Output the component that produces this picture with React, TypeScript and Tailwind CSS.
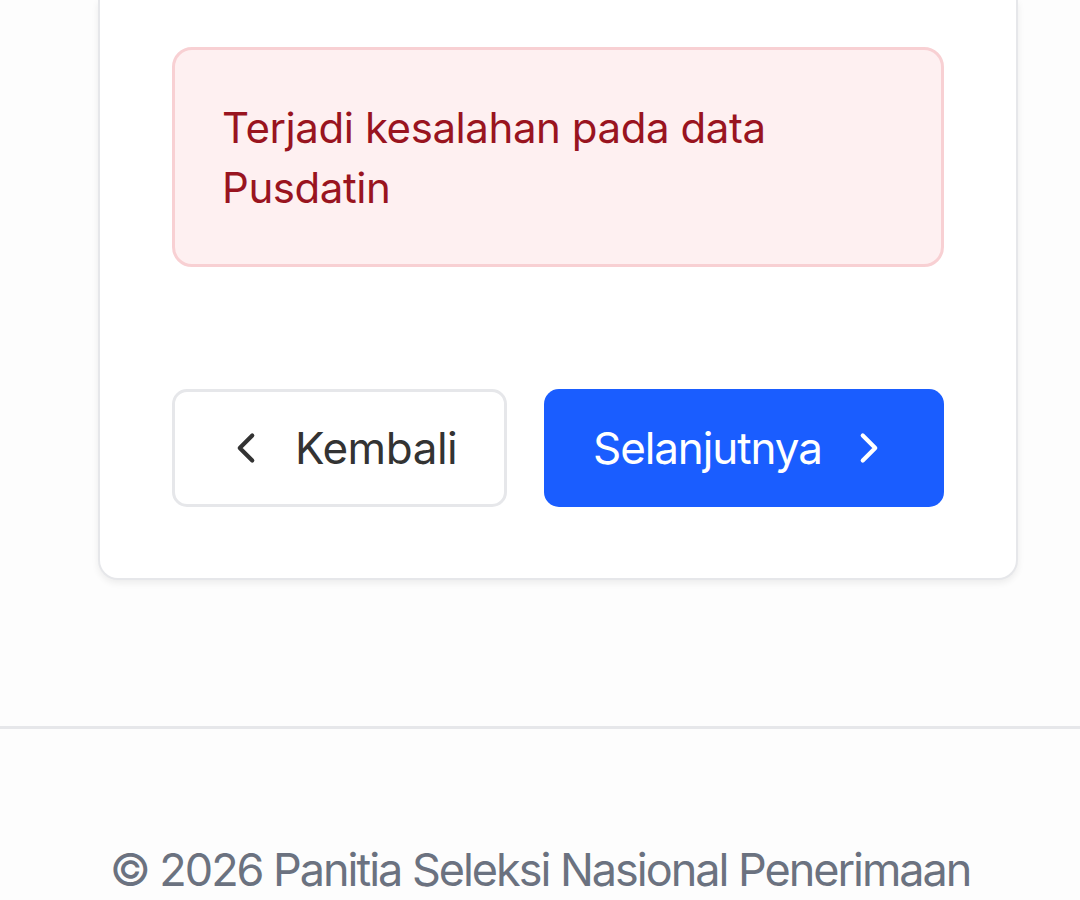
import React from "react";

function ChevronLeft() {
  return (
    <svg width="50" height="50" viewBox="0 0 24 24" fill="none" stroke="currentColor" strokeWidth="2" strokeLinecap="round" strokeLinejoin="round">
      <path d="m15 18-6-6 6-6" />
    </svg>
  );
}

function ChevronRight() {
  return (
    <svg width="50" height="50" viewBox="0 0 24 24" fill="none" stroke="currentColor" strokeWidth="2" strokeLinecap="round" strokeLinejoin="round">
      <path d="m9 18 6-6-6-6" />
    </svg>
  );
}

export default function App() {
  return (
    <div className="min-h-[900px] bg-[#fdfdfd] overflow-hidden" style={{ fontFamily: "Inter, 'Noto Sans', sans-serif" }}>
      <div className="ml-[98px] w-[920px] bg-white border-x-[2px] border-b-[2px] border-[#e6e7ea] rounded-b-[20px] shadow-[0_3px_7px_rgba(0,0,0,0.07)] px-[72px] pt-[47px] pb-[71px]">
        <div className="rounded-[20px] border-[3px] border-[#f8d0d3] bg-[#fef0f1] px-[47px] pt-[48px] pb-[46px]">
          <p className="text-[42px] leading-[60px] text-[#99141f] tracking-[-0.01em]">
            Terjadi kesalahan pada data
            <br />
            Pusdatin
          </p>
        </div>
        <div className="mt-[122px] flex justify-between">
          <button className="w-[335px] h-[118px] rounded-[15px] border-[3px] border-[#e6e7ea] bg-white flex items-center pl-[46px] gap-[24px] text-[#333333]">
            <ChevronLeft />
            <span className="text-[44px] leading-none tracking-[-0.01em]">Kembali</span>
          </button>
          <button className="w-[400px] h-[118px] rounded-[15px] bg-[#1a5dff] flex items-center pl-[49px] gap-[22px] text-white">
            <span className="text-[44px] leading-none tracking-[-0.025em]">Selanjutnya</span>
            <ChevronRight />
          </button>
        </div>
      </div>
      <div className="mt-[146px] border-t-[3px] border-[#e6e7ea] bg-[#fdfdfd] pt-[108px]">
        <p className="text-center text-[45px] leading-[66px] text-[#6b7280] tracking-[-0.045em]">
          © 2026 Panitia Seleksi Nasional Penerimaan
        </p>
      </div>
    </div>
  );
}
